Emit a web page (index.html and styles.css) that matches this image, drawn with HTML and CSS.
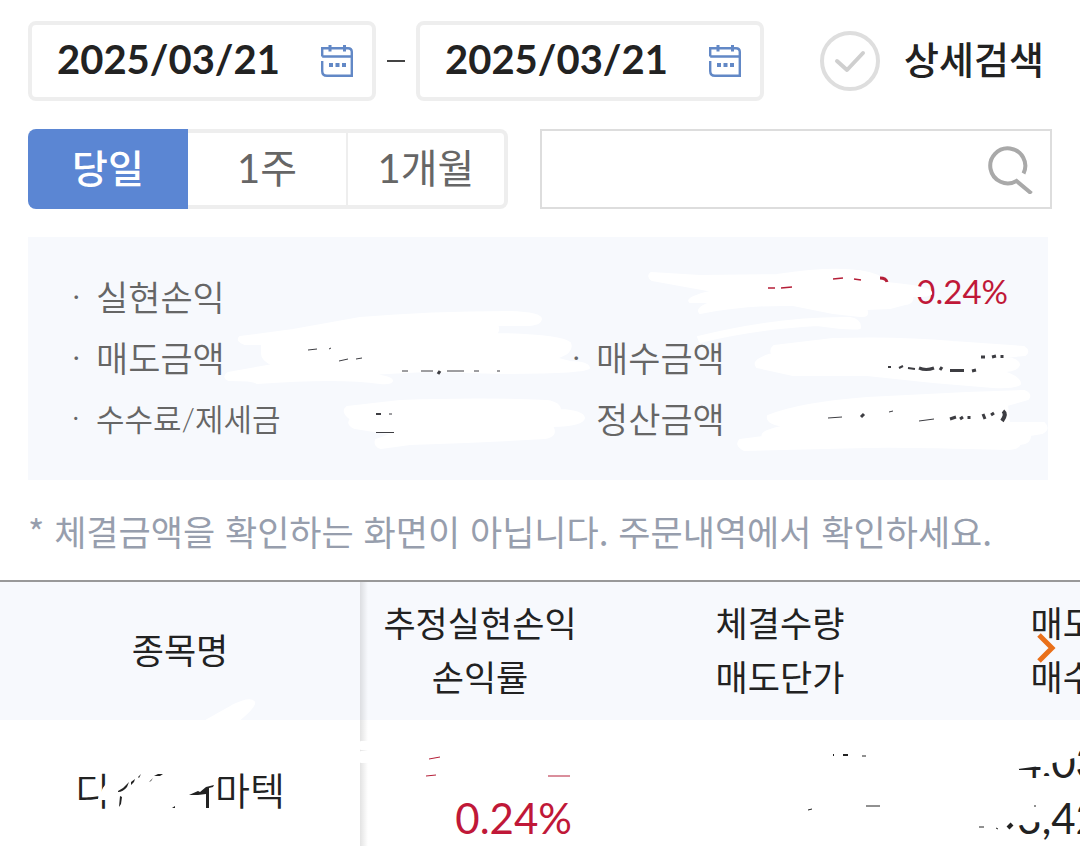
FILE: index.html
```html
<!DOCTYPE html>
<html lang="ko">
<head>
    <meta charset="UTF-8">
    <meta name="viewport" content="width=device-width, initial-scale=1.0">
    <title>실현손익</title>
    <link rel="stylesheet" href="styles.css">
</head>
<body>
    <form class="filters">
        <div class="row">
            <div class="date-box">
                <input type="text" value="2025/03/21" aria-label="조회 시작일">
                <button type="button" class="icon-btn" aria-label="시작일 선택">
                    <svg width="34" height="34" viewBox="0 0 34 34" fill="none" stroke="#6288c6" stroke-width="2.4">
                        <path d="M2.2 12.5V4.2H28Q31.8 4.2 31.8 8V31.8H7Q2.2 31.8 2.2 27V17M2.2 12.5H31.8"/>
                        <path d="M10 1V7.5M24.5 1V7.5" stroke-width="3"/>
                        <path d="M9 21h4M15.5 21h4M22 21h4" stroke-width="4"/>
                    </svg>
                </button>
            </div>
            <span class="dash"></span>
            <div class="date-box">
                <input type="text" value="2025/03/21" aria-label="조회 종료일">
                <button type="button" class="icon-btn" aria-label="종료일 선택">
                    <svg width="34" height="34" viewBox="0 0 34 34" fill="none" stroke="#6288c6" stroke-width="2.4">
                        <path d="M2.2 12.5V4.2H28Q31.8 4.2 31.8 8V31.8H7Q2.2 31.8 2.2 27V17M2.2 12.5H31.8"/>
                        <path d="M10 1V7.5M24.5 1V7.5" stroke-width="3"/>
                        <path d="M9 21h4M15.5 21h4M22 21h4" stroke-width="4"/>
                    </svg>
                </button>
            </div>
            <label class="detail">
                <span class="check">
                    <input type="checkbox">
                    <svg width="60" height="60" viewBox="0 0 60 60" fill="none" stroke="#cfcfcf" stroke-width="4" stroke-linecap="round" stroke-linejoin="round"><path d="M17 30L27 39L43 22"/></svg>
                </span>
                <span class="detail-text">상세검색</span>
            </label>
        </div>
        <div class="row">
            <div class="period">
                <button type="button" class="active">당일</button>
                <button type="button">1주</button>
                <button type="button">1개월</button>
            </div>
            <div class="search-box">
                <input type="search" aria-label="종목 검색">
                <button type="submit" class="icon-btn" aria-label="검색">
                    <svg width="48" height="50" viewBox="0 0 48 50" fill="none" stroke="#a9a9a9" stroke-width="4"><path d="M37.500 29.500A17.500 17.500 0 1 0 30.500 37L45.500 49.500"/></svg>
                </button>
            </div>
        </div>
    </form>

    <dl class="summary">
        <div class="item wide"><dt>실현손익</dt><dd class="up">0.24%</dd></div>
        <div class="item"><dt>매도금액</dt><dd></dd></div>
        <div class="item"><dt>매수금액</dt><dd></dd></div>
        <div class="item"><dt class="small">수수료/제세금</dt><dd></dd></div>
        <div class="item"><dt>정산금액</dt><dd></dd></div>
    </dl>

    <p class="note">* 체결금액을 확인하는 화면이 아닙니다. 주문내역에서 확인하세요.</p>

    <div class="table-area">
        <div class="table-scroll">
            <table>
                <thead>
                    <tr>
                        <th class="name">종목명</th>
                        <th class="profit">추정실현손익<br>손익률</th>
                        <th class="qty">체결수량<br>매도단가</th>
                        <th class="amount">매도금액<br>매수금액</th>
                    </tr>
                </thead>
                <tbody>
                    <tr>
                        <td class="name">디앤디파마텍</td>
                        <td class="profit up"><br>0.24%</td>
                        <td class="qty"></td>
                        <td class="amount">14,030<br>13,420</td>
                    </tr>
                </tbody>
            </table>
        </div>
        <button type="button" class="next" aria-label="다음 항목">
            <svg width="24" height="32" viewBox="0 0 24 32" fill="none" stroke="#e9701a" stroke-width="5"><path d="M3 3L16 16L3 29"/></svg>
        </button>
    </div>

    <!-- hand drawn strokes that hide the private amounts -->
    <svg class="ink" width="1080" height="846" viewBox="0 0 1080 846" aria-hidden="true">
        <g fill="#fff" stroke="#fff" stroke-width="2" stroke-linejoin="round">
            <path d="M240 337L293 330L360 318Q430 312 510 312Q541 313 541 319Q540 325 525 325H497Q500 331 495 334Q560 335 570 343Q574 353 555 358L570 362Q588 362 589 368Q587 373 503 373L427 371L368 374Q393 377 392 381Q391 384 380 383Q340 377 257 383Q254 380 229 380Q222 377 228 373L273 365Q262 360 262 354V344H245Q236 341 240 337Z"/>
            <path d="M347 407L400 401Q480 398 547 401Q560 403 560 410Q583 411 584 418Q583 425 552 426Q558 436 545 438Q480 442 410 444L381 448Q374 446 376 440L393 434L355 428Q346 424 351 419Q341 412 347 407Z"/>
            <path d="M651 273L700 276L777 275Q850 264 878 276L887 283L913 286L926 289Q932 291 931 294Q930 296 912 296Q914 303 905 304L890 308L866 309Q870 317 860 316L833 313L793 305Q745 304 700 313Q695 308 713 302L690 302Q685 298 713 291L652 280Q647 276 651 273Z"/>
            <path d="M698 337Q780 317 850 318Q861 320 860 328Q852 330 817 325Q750 329 700 342Z"/>
            <path d="M774 346L833 339Q900 337 953 342L1024 347Q1030 351 1025 355L1003 357Q1019 359 1019 365Q1017 371 1000 371Q1021 377 1020 384Q1015 388 993 387L933 382L867 375H793L757 367Q751 360 772 354Q770 349 774 346Z"/>
            <path d="M768 416Q800 403 867 398L967 393L1024 391Q1032 394 1028 399L1007 405L1009 423L1044 423Q1050 429 1042 433L1030 435Q1031 443 1020 444Q1018 449 1008 449Q900 446 867 447L744 450Q735 445 740 440L763 437Q759 431 787 426Q766 424 768 416Z"/>
            <path d="M207 720L232 706Q250 697 254 702Q256 706 239 720Z"/>
            <path d="M361 742H380V749H361ZM361 752H380V762H361Z"/>
            <path d="M107 768H228L219 776L214 781V812H109V799H99L104 788L107 784Z"/>
            <path d="M960 738H1080V748L1074 757L1049 763H1041L1040 765L1018 768V782H960ZM1038 777H1049V790H1038Z"/>
            <path d="M960 796H1046V812L1040 821L1017 823V840H960Z"/>
        </g>
        <g fill="none" stroke="#3d3d42" stroke-width="1">
            <path d="M308 350L317 349M329 349L331 348M339 361L348 359M356 359L362 358"/>
            <path d="M402 371H408M421 371H433M447 371H464M474 371H479M497 371H500"/>
            <path d="M438 374L440 371" stroke-width="3"/>
            <path d="M376 414H381" stroke-width="2"/>
            <path d="M389 414H392M376 432.500H394"/>
            <path d="M888 367H891M899 368L903 366M908 368L915 369" stroke-width="2"/>
            <path d="M919 368Q926 371 934 368M940 370L942 367M950 370.500H964M972 371L976 370M981 357H985M992 357L996 356M1002 358V355" stroke-width="3"/>
            <path d="M828 418L842 417M889 412L893 411M919 421L934 419"/>
            <path d="M861 417L864 414M950 419L956 417M960 419L963 417M969 419V416M983 414L985 419M991 415L994 413" stroke-width="3"/>
            <path d="M1003 411Q1007 414 1002 421" stroke-width="4"/>
        </g>
        <g fill="none" stroke="#b51f38" stroke-width="2">
            <path d="M768 288H775M781 288L792 287M833 279L843 278M854 279L861 280" stroke-width="1.500"/>
            <path d="M880 278Q886 278 887 282" stroke-width="3"/>
            <path d="M429 759L440 757M426 776L436 775M548 776H570" stroke-width="1"/>
        </g>
        <g fill="#222">
            <path d="M118 791L123 788L129 782L127 787Q123 792 118 792ZM120 796L122 797L121 804L119 807ZM131 782L135 779L134 782L131 785ZM149 782L153 778L151 781ZM154 776L158 774L163 774L160 776Z"/>
            <path d="M138 777L141 774L139 778ZM140 791L142 789ZM172 808L175 806V808Z"/>
            <path d="M189 795L198 791L200 792L206 787L214 785L213 787L209 788V808H206V794L198 795Z"/>
        </g>
        <g fill="none" stroke="#222" stroke-width="2">
            <path d="M833 755H834M843 755H848"/>
            <path d="M862 756H866M808 810L812 809M866 806H880M979 827H984M996 828L998 829M1034 806H1036" stroke-width="1"/>
            <path d="M1008 828L1012 824" stroke-width="4"/>
        </g>
    </svg>
</body>
</html>
```

FILE: styles.css
```css
* { box-sizing: border-box; }
body { margin: 0; position: relative; overflow: hidden; background: #fff; color: #222; font-family: Lato, "Noto Sans CJK KR", sans-serif; }
button, input { font: inherit; color: inherit; padding: 0; margin: 0; border: none; background: none; }
button { cursor: pointer; }
svg { display: block; }

.filters { padding: 21px 28px 0; }
.row { display: flex; align-items: center; margin-bottom: 28px; }
.date-box { display: flex; align-items: center; flex: 0 1 348px; min-width: 0; height: 80px; padding: 0 18px 0 25px; border: 4px solid #eee; border-radius: 8px; }
.date-box input { flex: 1; min-width: 0; height: 60px; padding-bottom: 4px; font-size: 40px; font-weight: bold; }
.icon-btn { flex: none; }
.dash { width: 18px; height: 2px; margin: 0 11px; background: #444; }
.detail { display: flex; align-items: center; gap: 24px; margin-left: 56px; font-size: 38px; font-weight: 500; line-height: 60px; white-space: nowrap; }
.detail-text { padding-bottom: 4px; }
.check { display: grid; }
.check input { grid-area: 1 / 1; appearance: none; width: 60px; height: 60px; border: 4px solid #dedede; border-radius: 50%; }
.check svg { grid-area: 1 / 1; }

.period { display: grid; grid-template-columns: repeat(3, 1fr); flex: 0 1 480px; height: 80px; margin-right: 32px; }
.period button { padding-bottom: 6px; border: 4px solid #eee; border-left: none; border-right-width: 2px; font-size: 40px; color: #666; }
.period button:last-child { border-right-width: 4px; border-radius: 0 8px 8px 0; }
.period .active { border: none; border-radius: 8px 0 0 8px; background: #5b86d3; color: #fff; font-size: 39px; font-weight: 500; }
.search-box { display: flex; align-items: center; flex: 1; min-width: 0; height: 80px; padding: 0 16px; border: 2px solid #ddd; }
.search-box input { flex: 1; min-width: 0; height: 60px; font-size: 35px; }

.summary { display: grid; grid-template-columns: 500fr 436fr; margin: 0 32px 0 28px; padding: 30px 40px 30px 44px; background: #f7f9fd; }
.item { display: flex; justify-content: space-between; height: 61px; line-height: 61px; }
.wide { grid-column: 1 / 3; }
.item dt { display: flex; font-size: 35px; font-weight: 350; color: #666; }
.item dt::before { content: "·"; width: 24px; line-height: 54px; }
.item .small { font-size: 31px; }
.item dd { margin: 0; font-size: 33px; line-height: 49px; }
.up { color: #c01838; }

.note { margin: 0; padding: 25px 28px 23px; font-family: "Noto Sans CJK KR", sans-serif; font-size: 35px; line-height: 52px; color: #979ead; white-space: nowrap; }

.table-area { position: relative; border-top: 2px solid #999; }
.table-scroll { overflow: hidden; }
table { width: 1230px; table-layout: fixed; border-collapse: collapse; }
th, td { padding: 0; text-align: center; font-weight: 400; }
th { height: 138px; padding-bottom: 2px; background: #f7f9fd; font-size: 35px; line-height: 54px; }
td { height: 140px; font-size: 42px; line-height: 56px; }
.name { width: 360px; }
.profit { width: 240px; background-image: linear-gradient(90deg, #0000001c, #0000); background-size: 8px 100%; background-repeat: no-repeat; }
.qty { width: 360px; }
.amount { width: 270px; }
td.name { font-size: 38px; font-weight: 350; }
td.profit { padding-right: 28px; text-align: right; }
td.amount { padding-left: 33px; text-align: left; }
.next { position: absolute; top: 50px; right: 20px; }

.ink { position: absolute; top: 0; left: 0; pointer-events: none; }
```
